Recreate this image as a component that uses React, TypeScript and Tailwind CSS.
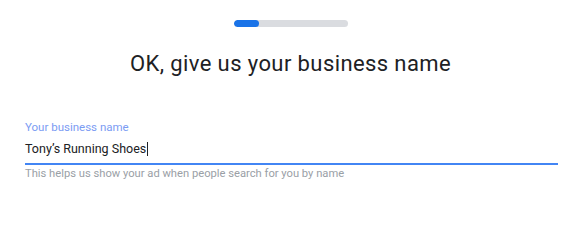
import React from "react";

export default function App() {
  return (
    <div className="w-[581px] h-[203px] bg-white font-['Roboto',sans-serif] overflow-hidden">
      <div className="flex justify-center pt-[20px]">
        <div className="w-[114px] h-[7px] rounded-full bg-[#dadce0] overflow-hidden">
          <div className="w-[25px] h-full rounded-full bg-[#1a73e8]" />
        </div>
      </div>
      <h1 className="mt-[23px] text-center text-[22px] tracking-[0.4px] leading-[28px] text-[#202124]">
        OK, give us your business name
      </h1>
      <div className="mt-[42px] pl-[25px] pr-[23px]">
        <div className="text-[11.5px] leading-[14px] text-[#7b9cf3]">Your business name</div>
        <div className="mt-[6px] flex items-center h-[18px] text-[12.5px] text-[#202124]">
          <span>Tony’s Running Shoes</span>
          <span className="ml-[1px] w-[1px] h-[14px] bg-[#202124]" />
        </div>
        <div className="mt-[5px] h-[2px] bg-[#4285f4]" />
        <div className="mt-[2px] text-[11.2px] leading-[14px] text-[#9aa0a6]">
          This helps us show your ad when people search for you by name
        </div>
      </div>
    </div>
  );
}
